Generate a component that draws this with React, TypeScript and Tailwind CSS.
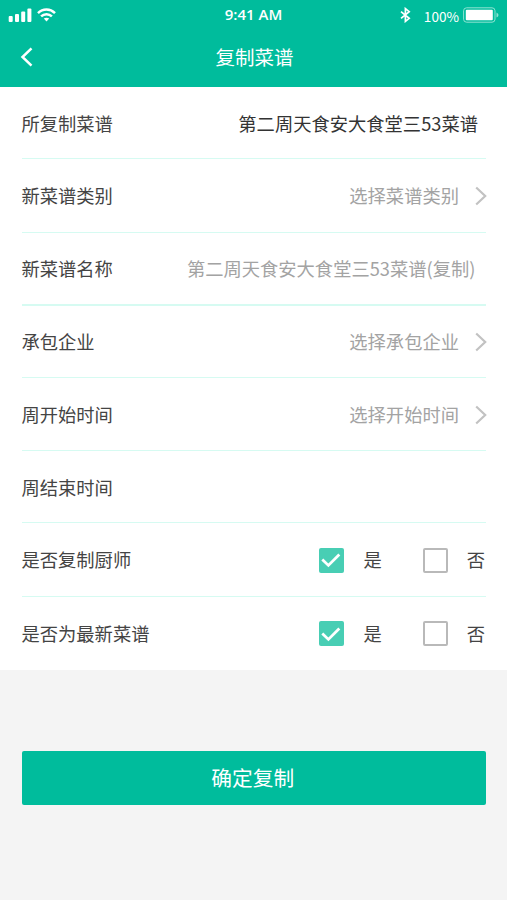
import type { ReactNode } from "react";

function Chevron() {
  return (
    <svg width="12" height="20" viewBox="0 0 12 20" fill="none" className="mt-[2px] ml-4 shrink-0">
      <path d="M1.2 1.5L10.2 10L1.2 18.5" stroke="#c2c2c2" strokeWidth="2.2" />
    </svg>
  );
}

function Row({ label, size, children }: { label: string; size: string; children?: ReactNode }) {
  return (
    <div className={`flex items-center justify-between border-[#d6fbf2] ${size}`}>
      <span>{label}</span>
      <div className="flex items-center">{children}</div>
    </div>
  );
}

function Picker({ text }: { text: string }) {
  return (
    <div className="-mr-[1px] flex items-center">
      <span className="text-[#a3a3a3]">{text}</span>
      <Chevron />
    </div>
  );
}

function Choice() {
  return (
    <div className="mr-[1px] flex items-center">
      <span className="mt-[2px] flex size-[25px] items-center justify-center rounded-[2px] bg-[#48ceb4]">
        <svg width="20" height="16" viewBox="0 0 20 16" fill="none">
          <path d="M1.3 7.6L7.4 13.4L18.3 2.6" stroke="#fff" strokeWidth="2.8" />
        </svg>
      </span>
      <span className="ml-[19.5px]">是</span>
      <span className="mt-[2px] ml-[41px] size-[25px] rounded-[2px] border-[2.5px] border-[#b9b9b9]" />
      <span className="ml-[19px]">否</span>
    </div>
  );
}

export default function App() {
  return (
    <div className="flex h-[900px] w-[507px] flex-col bg-[#f4f4f4] font-['Noto_Sans_CJK_SC',sans-serif] text-[18.3px] leading-[26px] text-[#444]">
      <header className="h-[87px] bg-[#00bc9c] text-white">
        <div className="grid h-[30px] grid-cols-3 items-center pr-[8px] pl-[8px]">
          <div className="flex items-center gap-[5px] pb-[1px]">
            <svg width="24" height="14" viewBox="0 0 24 14" fill="#fff">
              <rect x="0.7" y="8" width="4" height="6" rx="1" />
              <rect x="7" y="6" width="4" height="8" rx="1" />
              <rect x="13.2" y="3.5" width="4" height="10.5" rx="1" />
              <rect x="19.4" y="0.5" width="4" height="13.5" rx="1" />
            </svg>
            <svg width="19" height="14" viewBox="0 0 19 14" fill="none" stroke="#fff" strokeWidth="2.5">
              <path d="M1 5.1C5.8 0.4 13.2 0.4 18 5.1" />
              <path d="M4.1 8.4C7.1 5.4 11.9 5.4 14.9 8.4" />
              <path d="M6.8 10.6C8.3 9.3 10.7 9.3 12.2 10.6L9.5 13.4Z" fill="#fff" stroke="none" />
            </svg>
          </div>
          <div className="pb-[2px] text-center font-['Open_Sans',sans-serif] text-[15px] font-semibold whitespace-nowrap">9:41 AM</div>
          <div className="flex items-center justify-end">
            <svg width="11" height="16" viewBox="0 0 11 16" fill="none" stroke="#fff" strokeWidth="1.7" className="mr-[13px] mb-[1px]">
              <path d="M1 4.6L9.2 11.3L5.4 14.4V1.6L9.2 4.7L1 11.4" />
            </svg>
            <span className="mt-[1px] text-[13.6px]">100%</span>
            <svg width="36" height="16" viewBox="0 0 36 16" fill="none" className="ml-[4px]">
              <rect x="0.6" y="0.8" width="31.4" height="14.4" rx="3" stroke="#8fe3d2" />
              <rect x="2.8" y="2.8" width="27" height="10.4" rx="1" fill="#fff" />
              <path d="M33.5 5.5Q35.5 6.5 35.5 8T33.5 10.5Z" fill="#8fe3d2" />
            </svg>
          </div>
        </div>
        <div className="grid h-[54px] grid-cols-3 items-center px-[20px]">
          <svg width="14" height="20" viewBox="0 0 14 20" fill="none">
            <path d="M11.5 1.3L2.5 10L11.5 18.7" stroke="#fff" strokeWidth="2.5" />
          </svg>
          <h1 className="pl-[2px] text-center text-[19.5px]">复制菜谱</h1>
        </div>
      </header>

      <main className="bg-white pr-[21px] pl-[21.5px]">
        <Row label="所复制菜谱" size="h-[72px] border-b">
          <span className="mr-[8px] text-[#333]">第二周天食安大食堂三53菜谱</span>
        </Row>
        <Row label="新菜谱类别" size="h-[74px] border-b pb-[1px]">
          <Picker text="选择菜谱类别" />
        </Row>
        <Row label="新菜谱名称" size="h-[73px] border-b-2 pb-[1px]">
          <span className="mr-[10.5px] text-[#a3a3a3]">第二周天食安大食堂三53菜谱(复制)</span>
        </Row>
        <Row label="承包企业" size="h-[72px] border-b pb-[1px]">
          <Picker text="选择承包企业" />
        </Row>
        <Row label="周开始时间" size="h-[73px] border-b">
          <Picker text="选择开始时间" />
        </Row>
        <Row label="周结束时间" size="h-[72px] border-b" />
        <Row label="是否复制厨师" size="h-[74px] border-b pb-[1px]">
          <Choice />
        </Row>
        <Row label="是否为最新菜谱" size="h-[73px] pb-[2px]">
          <Choice />
        </Row>
      </main>

      <button className="mt-[81px] mr-[21px] ml-[21.5px] h-[54px] rounded-[2px] bg-[#00bc9c] pr-[2px] pb-[2px] text-[20.7px] text-white">
        确定复制
      </button>
    </div>
  );
}
